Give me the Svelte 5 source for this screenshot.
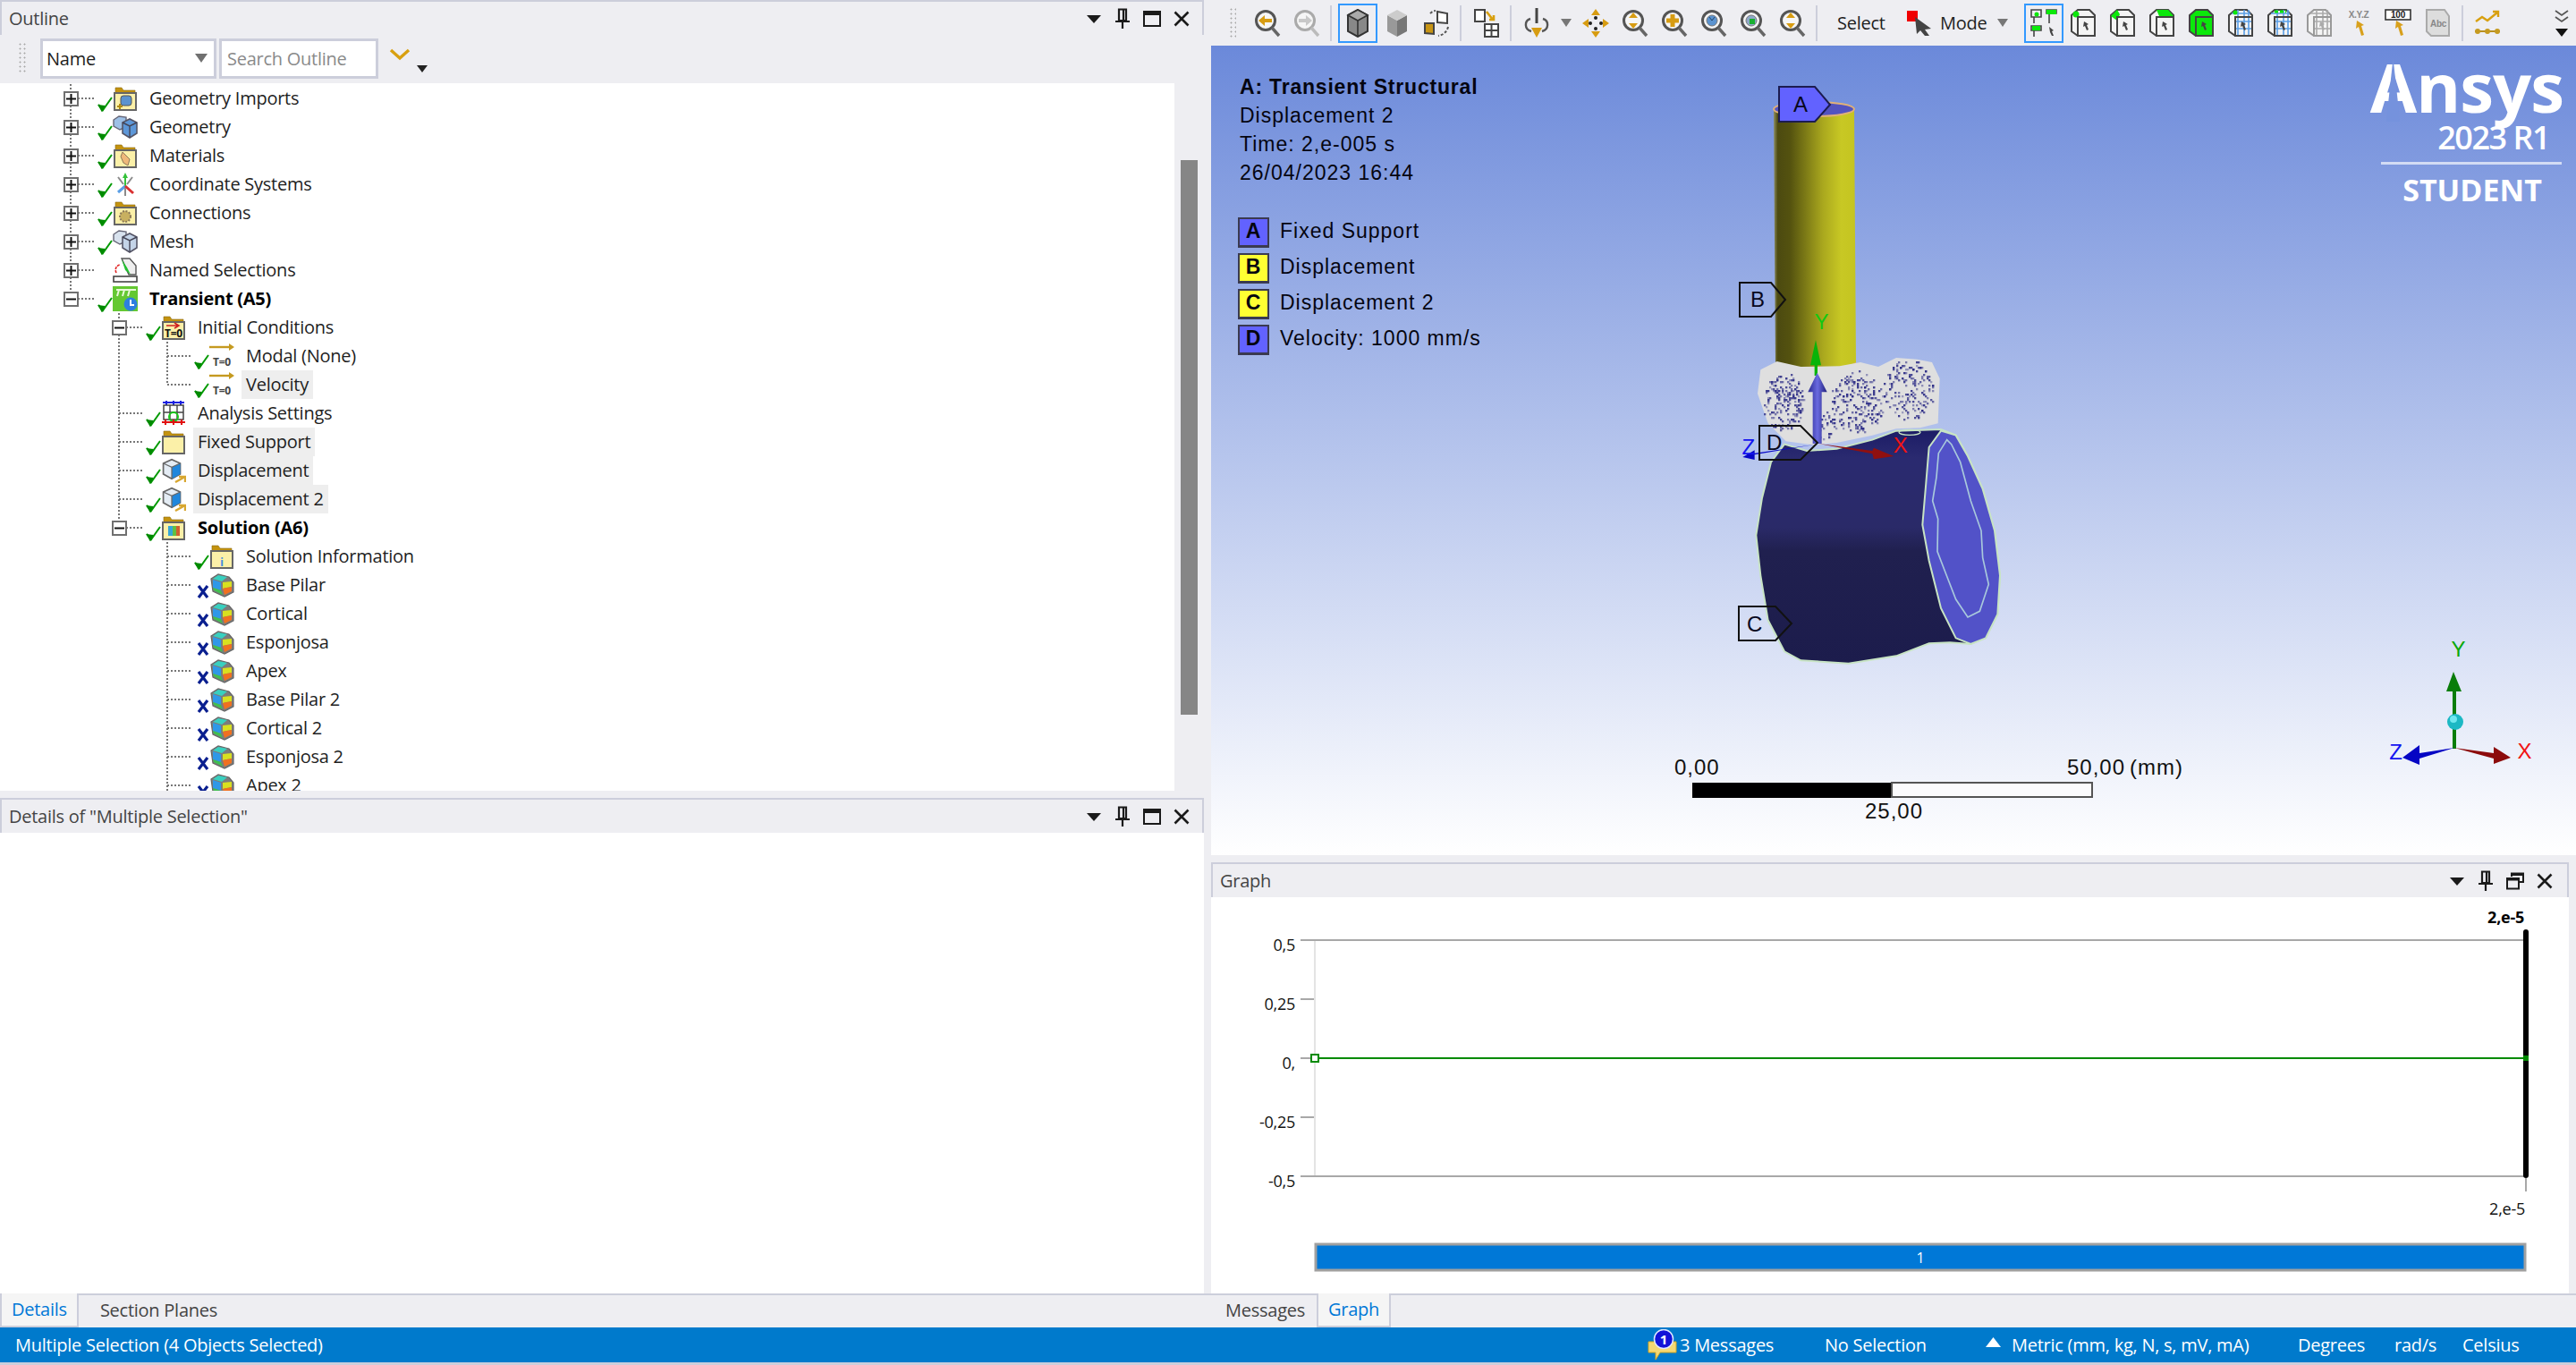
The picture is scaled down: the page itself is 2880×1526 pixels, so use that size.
<script>
  const rows = [
    { t: 'Geometry Imports', l: 0, icon: 'fgeo', st: 'ok', exp: '+' },
    { t: 'Geometry', l: 0, icon: 'geometry', st: 'ok', exp: '+' },
    { t: 'Materials', l: 0, icon: 'fmat', st: 'ok', exp: '+' },
    { t: 'Coordinate Systems', l: 0, icon: 'coord', st: 'ok', exp: '+' },
    { t: 'Connections', l: 0, icon: 'fconn', st: 'ok', exp: '+' },
    { t: 'Mesh', l: 0, icon: 'mesh', st: 'ok', exp: '+' },
    { t: 'Named Selections', l: 0, icon: 'named', exp: '+' },
    { t: 'Transient (A5)', l: 0, icon: 'transient', st: 'ok', exp: '-', end: true, bold: true },
    { t: 'Initial Conditions', l: 1, icon: 'fic', st: 'ok', exp: '-' },
    { t: 'Modal (None)', l: 2, icon: 'tzero', st: 'ok', g: [1] },
    { t: 'Velocity', l: 2, icon: 'tzero', st: 'ok', g: [1], end: true, sel: true },
    { t: 'Analysis Settings', l: 1, icon: 'analysis', st: 'ok' },
    { t: 'Fixed Support', l: 1, icon: 'fixed', st: 'ok', sel: true },
    { t: 'Displacement', l: 1, icon: 'disp', st: 'ok', sel: true },
    { t: 'Displacement 2', l: 1, icon: 'disp', st: 'ok', sel: true },
    { t: 'Solution (A6)', l: 1, icon: 'fsol', st: 'ok', exp: '-', end: true, bold: true },
    { t: 'Solution Information', l: 2, icon: 'finfo', st: 'ok' },
    { t: 'Base Pilar', l: 2, icon: 'result', st: 'x' },
    { t: 'Cortical', l: 2, icon: 'result', st: 'x' },
    { t: 'Esponjosa', l: 2, icon: 'result', st: 'x' },
    { t: 'Apex', l: 2, icon: 'result', st: 'x' },
    { t: 'Base Pilar 2', l: 2, icon: 'result', st: 'x' },
    { t: 'Cortical 2', l: 2, icon: 'result', st: 'x' },
    { t: 'Esponjosa 2', l: 2, icon: 'result', st: 'x' },
    { t: 'Apex 2', l: 2, icon: 'result', st: 'x' }
  ];

  const legend = [
    { k: 'A', c: 'blue', t: 'Fixed Support' },
    { k: 'B', c: 'yellow', t: 'Displacement' },
    { k: 'C', c: 'yellow', t: 'Displacement 2' },
    { k: 'D', c: 'blue', t: 'Velocity: 1000 mm/s' }
  ];

  const ticks = [
    { v: '0,5', y: 1052 },
    { v: '0,25', y: 1118 },
    { v: '0,', y: 1184 },
    { v: '-0,25', y: 1250 },
    { v: '-0,5', y: 1316 }
  ];

  const filters = ['vertex', 'edge', 'face', 'body', 'mvertex', 'melem', 'mgray', 'xyz', 'hundred', 'abc'];

  // speckle of the foam lobes, in the same zoomed coordinates as the bone group
  const lobes = [
    { x: 340, y: 265, rx: 70, ry: 95, n: 190 },
    { x: 590, y: 265, rx: 90, ry: 105, n: 210 },
    { x: 760, y: 225, rx: 85, ry: 100, n: 170 },
    { x: 480, y: 340, rx: 40, ry: 50, n: 35 }
  ];
  let seed = 4211;
  function rnd() {
    seed = (seed * 1103515 + 12345) % 2147483;
    return seed / 2147483;
  }
  const specks = [];
  for (const lobe of lobes) {
    for (let i = 0; i < lobe.n; i++) {
      const a = rnd() * Math.PI * 2;
      const r = Math.sqrt(rnd());
      specks.push({
        x: Math.round((lobe.x + Math.cos(a) * r * lobe.rx) / 6) * 6,
        y: Math.round((lobe.y + Math.sin(a) * r * lobe.ry) / 6) * 6,
        o: 0.35 + rnd() * 0.6
      });
    }
  }
</script>

{#snippet check()}
  <svg width="17" height="17" viewBox="0 0 17 17"><path d="M1 9 L6 15 L16 1" fill="none" stroke="#009a00" stroke-width="2" /><path d="M1 9 L5 16 L8 10" fill="#008a00" stroke="#008a00" stroke-width="1.5" /></svg>
{/snippet}

{#snippet cross()}
  <svg width="14" height="15" viewBox="0 0 14 15"><path d="M2 1 L12 14 M12 1 L2 14" stroke="#0a1f8f" stroke-width="3.2" /></svg>
{/snippet}

{#snippet cubeMark(face, stroke)}
  <path d="M3 7 L14 2 L25 7 L25 21 L14 27 L3 21 Z" fill="#e4ecf4" stroke={stroke} stroke-width="2" />
  <path d="M14 12 L25 7 L25 21 L14 27 Z" fill={face} />
  <path d="M3 7 L14 12 L25 7 M14 12 L14 27" fill="none" stroke={stroke} stroke-width="1.5" />
{/snippet}

{#snippet treeIcon(kind)}
  <svg class="ticon" width="28" height="28" viewBox="0 0 28 28">
    {#if kind[0] === 'f'}
      <path d="M3 2 H10 L12 5 H25 V10 H3 Z" fill="#c4930f" stroke="#8a6a10" stroke-width=".6" />
      <rect x="2" y="8" width="24" height="19" fill="#fbf0a8" stroke="#666" stroke-width="2" />
      {#if kind === 'fgeo'}
        <rect x="9" y="11" width="12" height="11" rx="3" fill="#5b93cf" stroke="#555" />
        <path d="M5 23 h6 M8 20 v6" stroke="#b08a10" stroke-width="2" />
      {:else if kind === 'fmat'}
        <path d="M11 10 L19 18 L17 25 L12 22 L9 15 Z" fill="#efb87a" stroke="#8c7a5a" />
      {:else if kind === 'fconn'}
        <circle cx="14" cy="18" r="6" fill="#c8b060" stroke="#8c7a5a" stroke-width="2" stroke-dasharray="2 1.5" />
      {:else if kind === 'fsol'}
        <rect x="8" y="12" width="5" height="11" fill="#35a7d8" /><rect x="13" y="12" width="4" height="11" fill="#62c040" /><rect x="17" y="12" width="4" height="11" fill="#d06030" />
      {:else if kind === 'finfo'}
        <text x="14" y="25" text-anchor="middle" class="icotext" fill="#3a8ae0">i</text>
      {:else if kind === 'fic'}
        <path d="M6 12 H19 M15 9 L20 12 L15 15" fill="none" stroke="#d02020" stroke-width="1.6" />
        <text x="14" y="25" text-anchor="middle" class="icotext" fill="#111">T=0</text>
      {/if}
    {:else if kind === 'geometry' || kind === 'mesh'}
      {@const c = kind === 'mesh' ? '#c4d4e8' : '#5d97d8'}
      <path d="M1 6 L7 2 L15 3 L15 14 L8 17 L1 13 Z" fill={kind === 'mesh' ? '#d8e2ee' : '#9dc0e6'} stroke="#667" stroke-width="1.4" />
      <path d="M11 9 L19 5 L27 9 L27 21 L19 26 L11 21 Z" fill={c} stroke="#556" stroke-width="1.6" />
      <path d="M11 9 L19 13 L27 9 M19 13 L19 26" fill="none" stroke="#445" stroke-width="1.4" />
    {:else if kind === 'coord'}
      <path d="M14 1 L17 7 H15 V16 H13 V7 H11 Z" fill="#36c23a" />
      <path d="M14 16 L6 23" stroke="#5b9fe6" stroke-width="3" /><path d="M14 16 L23 24" stroke="#d93030" stroke-width="3" />
      <path d="M6 6 L12 14 M22 6 L16 14 M14 18 V27" stroke="#8b8b8b" stroke-width="2" />
    {:else if kind === 'named'}
      <path d="M10 1 L19 1 L26 9 L26 19 L18 19 Z" fill="#eee" stroke="#555" stroke-width="1.4" />
      <path d="M10 2 L16 11 L20 19 L14 14 Z" fill="#22c030" />
      <path d="M4 17 C2 13 4 9 8 8" fill="none" stroke="#e02020" stroke-width="1.6" stroke-dasharray="3 1" />
      <rect x="1" y="21" width="26" height="6" fill="#fff" stroke="#444" stroke-width="1.6" />
    {:else if kind === 'transient'}
      <rect width="28" height="28" fill="#64c832" />
      <path d="M4 4 H26 M7 4 L5 11 M13 4 L11 11 M19 4 L17 11" stroke="#e8f8d8" stroke-width="2" />
      <circle cx="20" cy="20" r="7.5" fill="#2d7fe0" /><path d="M20 15 V21 H24" fill="none" stroke="#fff" stroke-width="2" />
    {:else if kind === 'tzero'}
      <path d="M0 4 H24" stroke="#c59a20" stroke-width="2.4" /><path d="M22 0 L28 4 L22 8 Z" fill="#c59a20" />
      <text x="14" y="25" text-anchor="middle" class="icotext" fill="#444">T=0</text>
    {:else if kind === 'analysis'}
      <path d="M2 2 H26 M6 0 V5 M14 0 V5 M22 0 V5" stroke="#1a20e0" stroke-width="2" />
      <rect x="3" y="5" width="22" height="16" fill="#fff" stroke="#444" stroke-width="1.5" />
      <path d="M10 5 V21 M18 5 V21 M3 13 H25" stroke="#444" stroke-width="1.4" />
      <circle cx="14" cy="18" r="5" fill="none" stroke="#18c818" stroke-width="2" />
      <path d="M1 24 H27 M5 21 V27 M14 21 V27 M23 21 V27" stroke="#e01010" stroke-width="2" />
    {:else if kind === 'fixed'}
      <g transform="scale(.86)">{@render cubeMark('#1f86dc', '#666')}</g>
      <path d="M13 27 L18 21 M18 27 L23 21 M23 27 L28 21" stroke="#d8a730" stroke-width="2.4" />
    {:else if kind === 'disp'}
      <g transform="scale(.86)">{@render cubeMark('#1f86dc', '#666')}</g>
      <path d="M16 27 L27 21 M20 21 H27 V27" fill="none" stroke="#d8a730" stroke-width="2.4" />
    {:else if kind === 'result'}
      <path d="M2 7 L10 2 L22 5 L27 11 L27 22 L17 27 L4 21 Z" fill="#7c7c7c" stroke="#666" stroke-width="1.2" />
      <path d="M4 7 L10 3 L20 5 L14 10 Z" fill="#38d0c0" />
      <path d="M4 8 L13 11 L13 20 L4 17 Z" fill="#2f98e8" />
      <path d="M15 11 L25 10 L25 16 L15 18 Z" fill="#d8e020" />
      <path d="M15 18 L25 16 L25 21 L17 25 Z" fill="#f07020" />
      <path d="M4 17 L13 20 L15 25 L5 20 Z" fill="#40c050" />
    {/if}
  </svg>
{/snippet}

{#snippet panelIcons(win)}
  <span class="picons">
    <svg width="18" height="12" viewBox="0 0 18 12"><path d="M1 2 H17 L9 11 Z" fill="#1a1a1a" /></svg>
    <svg width="18" height="24" viewBox="0 0 18 24"><path d="M5 1.5 H13 V14 H5 Z M1 15 H17 M9 15 V23 M10 2 V14" fill="none" stroke="#1a1a1a" stroke-width="2.2" /></svg>
    {#if win}
      <svg width="20" height="20" viewBox="0 0 20 20"><path d="M6 5 V1.5 H19 V11 H15 M1 7 H14 V18.5 H1 Z" fill="none" stroke="#1a1a1a" stroke-width="2" /><path d="M1 8 H14 M6 2.5 H19" stroke="#1a1a1a" stroke-width="3" /></svg>
    {:else}
      <svg width="20" height="18" viewBox="0 0 20 18"><rect x="1" y="1" width="18" height="16" fill="none" stroke="#1a1a1a" stroke-width="2" /><path d="M1 3 H19" stroke="#1a1a1a" stroke-width="4" /></svg>
    {/if}
    <svg width="18" height="18" viewBox="0 0 18 18"><path d="M1.5 1.5 L16.5 16.5 M16.5 1.5 L1.5 16.5" stroke="#1a1a1a" stroke-width="2.6" /></svg>
  </span>
{/snippet}

{#snippet mag(glyph)}
  <svg width="32" height="34" viewBox="0 0 32 34">
    <circle cx="14" cy="14" r="10.5" fill="#f6f6f6" stroke={glyph === 'off' ? '#aaa' : '#555'} stroke-width="3" />
    <path d="M21 22 L29 31" stroke={glyph === 'off' ? '#bbb' : '#666'} stroke-width="3.4" />
    {#if glyph === 'back'}
      <path d="M6 14 L13 8 V12 H21 V16 H13 V20 Z" fill="#d79c12" />
    {:else if glyph === 'off'}
      <path d="M22 14 L15 8 V12 H7 V16 H15 V20 Z" fill="#c8c8c8" />
    {:else if glyph === 'updown'}
      <path d="M14 5 L19 11 H9 Z M14 23 L19 17 H9 Z" fill="#d79c12" />
    {:else if glyph === 'plus'}
      <path d="M14 7 V21 M7 14 H21" stroke="#d79c12" stroke-width="5" />
    {:else if glyph === 'blue'}
      <circle cx="14" cy="14" r="6" fill="#5b93cf" stroke="#777" /><path d="M11 10 L14 14 L17 10" stroke="#246" fill="none" />
    {:else if glyph === 'green'}
      <circle cx="14" cy="14" r="6" fill="#8fa8c8" stroke="#777" /><rect x="12" y="12" width="6" height="6" fill="#18b030" />
    {/if}
  </svg>
{/snippet}

{#snippet selBox(kind)}
  <svg width="30" height="32" viewBox="0 0 30 32">
    {#if kind === 'xyz' || kind === 'hundred'}
      {#if kind === 'xyz'}
        <text x="15" y="10" text-anchor="middle" class="tiny" fill="#888">X.Y.Z</text>
      {:else}
        <rect x="1" y="1" width="28" height="11" fill="#fff" stroke="#333" stroke-width="1.6" />
        <text x="15" y="10" text-anchor="middle" class="tiny" fill="#222">100</text>
      {/if}
      <path d="M13 13 L21 18 L18 19 L21 29 L18 30 L15 20 L12 22 Z" fill="#d8a01c" />
    {:else if kind === 'abc'}
      <path d="M3 1 H23 L28 8 V30 H8 L3 25 Z" fill="#ddd" stroke="#aaa" stroke-width="2" />
      <text x="16" y="20" text-anchor="middle" class="tiny" fill="#888">Abc</text>
    {:else}
      {@const s = kind === 'mgray' ? '#999' : '#444'}
      <path d="M2 7 L9 1 H22 L28 7 V30 H9 L2 25 Z" fill={kind === 'body' ? '#0be80b' : '#f4f4f4'} stroke={s} stroke-width="2" />
      {#if kind === 'edge'}<path d="M2 8 L9 1 L12 6 L9 13 Z" fill="#0be80b" />{/if}
      {#if kind === 'vertex'}<circle cx="7" cy="6" r="3.5" fill="#0be80b" />{/if}
      {#if kind === 'face'}<path d="M9 1 H22 L28 8 H12 Z" fill="#0be80b" />{/if}
      {#if kind === 'mvertex' || kind === 'melem' || kind === 'mgray'}
        <path d="M5 5 H26 M12 1 V30 M19 1 V30 M10 14 H28 M10 22 H28 M24 1 V30" stroke={kind === 'mgray' ? '#aaa' : '#5b9fe6'} stroke-width="1.6" />
      {/if}
      {#if kind === 'mvertex'}<circle cx="9" cy="4" r="2.5" fill="#0be80b" />{/if}
      {#if kind === 'melem'}<path d="M9 3 H22" stroke="#0be80b" stroke-width="3" stroke-dasharray="4 2" />{/if}
      <rect x="9" y="9" width="19" height="21" fill="none" stroke={s} stroke-width="2" />
      <path d="M16 14 L21 17 L19 18 L21 23 L19 24 L17 19 L15 20 Z" fill={kind === 'mgray' ? '#aaa' : '#444'} />
    {/if}
  </svg>
{/snippet}

<div class="app">
  <div class="main">
    <div class="left">
      <section class="outline">
        <div class="phead">
          <span class="ptitle">Outline</span>
          <span class="grip"></span>
          {@render panelIcons(false)}
        </div>
        <div class="otools">
          <span class="vgrip"></span>
          <div class="field namefield">Name<svg width="16" height="12" viewBox="0 0 16 12"><path d="M1 1 H15 L8 11 Z" fill="#707070" /></svg></div>
          <div class="field searchfield">Search Outline</div>
          <svg class="chev" width="24" height="14" viewBox="0 0 24 14"><path d="M2 2 L12 11 L22 2" fill="none" stroke="#d8a010" stroke-width="3.4" /></svg>
          <svg class="minidown" width="12" height="8" viewBox="0 0 12 8"><path d="M0 0 H12 L6 8 Z" fill="#222" /></svg>
        </div>
        <div class="treewrap">
          <div class="tree">
            {#each rows as r}
              <div class="row">
                {#each Array(r.l) as _, i}
                  <span class="cell" class:vline={r.g && r.g.includes(i)}></span>
                {/each}
                <span class="cell conn" class:end={r.end}>
                  {#if r.exp}
                    <span class="box">
                      <svg width="11" height="11" viewBox="0 0 11 11">
                        <path d="M0 5.5 H11" stroke="#111" stroke-width="2" />
                        {#if r.exp === '+'}<path d="M5.5 0 V11" stroke="#111" stroke-width="2" />{/if}
                      </svg>
                    </span>
                  {/if}
                </span>
                <span class="status">
                  {#if r.st === 'ok'}{@render check()}{:else if r.st === 'x'}{@render cross()}{/if}
                </span>
                {@render treeIcon(r.icon)}
                <span class="label" class:bold={r.bold} class:sel={r.sel}>{r.t}</span>
              </div>
            {/each}
          </div>
          <div class="scroll"><span class="thumb"></span></div>
        </div>
      </section>

      <section class="details">
        <div class="phead">
          <span class="ptitle">Details of "Multiple Selection"</span>
          <span class="grip"></span>
          {@render panelIcons(false)}
        </div>
        <div class="dbody"></div>
      </section>

      <div class="tabs">
        <span class="tab active first">Details</span>
        <span class="tab">Section Planes</span>
      </div>
    </div>

    <div class="right">
      <div class="toolbar">
        <span class="vgrip tgrip"></span>
        <span class="tb">{@render mag('back')}</span>
        <span class="tb">{@render mag('off')}</span>
        <span class="sep"></span>
        <span class="tb on">
          <svg width="26" height="32" viewBox="0 0 26 32"><path d="M2 7 L13 1 L24 7 V25 L13 31 L2 25 Z" fill="#888" stroke="#333" stroke-width="2" /><path d="M2 7 L13 13 L24 7 L13 1 Z" fill="#aaa" stroke="#333" stroke-width="1.6" /><path d="M13 13 V31" stroke="#333" stroke-width="1.6" /></svg>
        </span>
        <span class="tb">
          <svg width="26" height="32" viewBox="0 0 26 32"><path d="M2 7 L13 13 L13 31 L2 25 Z" fill="#999" /><path d="M24 7 L13 13 L13 31 L24 25 Z" fill="#777" /><path d="M2 7 L13 1 L24 7 L13 13 Z" fill="#ccc" /></svg>
        </span>
        <span class="tb">
          <svg width="30" height="32" viewBox="0 0 30 32"><path d="M16 3 L27 5 L27 16 L16 15 Z" fill="#fff" stroke="#444" stroke-width="2" /><path d="M2 16 L12 16 L12 28 L2 27 Z" fill="#c79414" stroke="#444" stroke-width="2" /><path d="M8 5 C10 3 12 2 14 2 M28 20 C27 25 23 29 17 30" fill="none" stroke="#555" stroke-width="2" stroke-dasharray="3 2" /></svg>
        </span>
        <span class="sep s2"></span>
        <span class="tb">
          <svg width="28" height="32" viewBox="0 0 28 32"><rect x="1" y="1" width="11" height="13" fill="#fff" stroke="#444" stroke-width="2" /><path d="M14 3 L21 12 M17 12 H22 V7" fill="none" stroke="#d8a010" stroke-width="2.6" /><rect x="12" y="17" width="15" height="14" fill="#fff" stroke="#444" stroke-width="2" /><path d="M19.5 17 V31 M12 24 H27" stroke="#444" stroke-width="2" /></svg>
        </span>
        <span class="sep s2"></span>
        <span class="tb">
          <svg width="30" height="36" viewBox="0 0 30 36"><path d="M15 1 V18" stroke="#444" stroke-width="3" /><path d="M8 13 C1 15 1 25 9 27 M22 13 C29 15 29 25 21 27" fill="none" stroke="#555" stroke-width="2.4" /><path d="M9 23 H21 L15 34 Z" fill="#d79c12" /></svg>
        </span>
        <span class="mini"><svg width="12" height="9" viewBox="0 0 12 9"><path d="M0 0 H12 L6 9 Z" fill="#777" /></svg></span>
        <span class="tb">
          <svg width="30" height="32" viewBox="0 0 30 32"><path d="M15 0 L20 7 H10 Z M15 32 L20 25 H10 Z M0 16 L7 11 V21 Z M30 16 L23 11 V21 Z" fill="#d79c12" /><circle cx="15" cy="10" r="2" fill="#222" /><circle cx="15" cy="22" r="2" fill="#222" /><circle cx="9" cy="16" r="2" fill="#222" /><circle cx="21" cy="16" r="2" fill="#222" /></svg>
        </span>
        <span class="tb">{@render mag('updown')}</span>
        <span class="tb">{@render mag('plus')}</span>
        <span class="tb">{@render mag('blue')}</span>
        <span class="tb">{@render mag('green')}</span>
        <span class="tb">{@render mag('updown')}</span>
        <span class="sep"></span>
        <span class="tbtext select">Select</span>
        <svg class="cursor" width="28" height="28" viewBox="0 0 28 28"><rect width="12" height="12" fill="#f00000" /><path d="M9 7 L27 20 L20 21 L25 28 H20 L15 22 L11 26 Z" fill="#444" /></svg>
        <span class="tbtext mode">Mode</span>
        <svg class="modearrow" width="12" height="9" viewBox="0 0 12 9"><path d="M0 0 H12 L6 9 Z" fill="#777" /></svg>
        <span class="tb on allsel">
          <svg width="30" height="32" viewBox="0 0 30 32">
            <path d="M1 1 H12 V9 H1 Z M4 9 V16 M18 1 H29 V5 H18 Z M21 5 V16 M1 19 H12 V24 H1 Z M4 24 V31" fill="none" stroke="#444" stroke-width="1.6" />
            <circle cx="7" cy="6" r="2.5" fill="#0be80b" /><rect x="18" y="1" width="11" height="5" fill="#0be80b" /><rect x="2" y="19" width="9" height="5" fill="#0be80b" />
            <path d="M21 20 L26 24 L24 25 L26 30 L24 30 L22 26 Z" fill="#444" />
          </svg>
        </span>
        {#each filters as f}
          <span class="tb">{@render selBox(f)}</span>
        {/each}
        <span class="sep s3"></span>
        <span class="tb">
          <svg width="30" height="30" viewBox="0 0 30 30"><path d="M2 13 L9 8 L15 12 L26 3 M21 2 H27 V8" fill="none" stroke="#d8a010" stroke-width="2.4" /><path d="M1 24 H29" stroke="#b89020" stroke-width="2" /><circle cx="4" cy="24" r="3" fill="#c59a20" /><circle cx="15" cy="24" r="3" fill="#c59a20" /><circle cx="26" cy="24" r="3" fill="#c59a20" /></svg>
        </span>
        <span class="more">
          <svg width="16" height="15" viewBox="0 0 16 15"><path d="M1 1 L8 6 L15 1 M1 8 L8 13 L15 8" fill="none" stroke="#555" stroke-width="1.8" /></svg>
          <svg width="16" height="9" viewBox="0 0 16 9"><path d="M1 0 H15 L8 9 Z" fill="#111" /></svg>
        </span>
      </div>

      <div class="viewport">
        <svg class="scene" width="1526" height="905" viewBox="1354 51 1526 905">
          <defs>
            <linearGradient id="cyl" x1="0" x2="1" y1="0" y2="0">
              <stop offset="0" stop-color="#8e8e60" />
              <stop offset=".05" stop-color="#4c4a10" />
              <stop offset=".2" stop-color="#54520f" />
              <stop offset=".6" stop-color="#aaa81e" />
              <stop offset=".82" stop-color="#c8c824" />
              <stop offset="1" stop-color="#c4c420" />
            </linearGradient>
            <linearGradient id="bone" x1="0" x2="0" y1="0" y2="1">
              <stop offset="0" stop-color="#1c1c66" />
              <stop offset=".12" stop-color="#2a2a70" />
              <stop offset=".42" stop-color="#2a2a68" />
              <stop offset=".52" stop-color="#20204f" />
              <stop offset="1" stop-color="#1c1c4c" />
            </linearGradient>
            <linearGradient id="shaft" x1="0" x2="1" y1="0" y2="0">
              <stop offset="0" stop-color="#2a2a90" />
              <stop offset=".5" stop-color="#6a6ae0" />
              <stop offset="1" stop-color="#20207a" />
            </linearGradient>
          </defs>

          <!-- post -->
          <path d="M1983 122 L1985 408 C2000 415 2060 415 2075 408 L2073 122 Z" fill="url(#cyl)" />
          <path d="M1985 405 C2000 414 2060 414 2075 405 L2075 409 C2060 416 2000 416 1985 409 Z" fill="#e0b078" />
          <ellipse cx="2028" cy="122" rx="45" ry="8" fill="#5353bf" stroke="#e0b078" stroke-width="2" />

          <g transform="translate(1880 360) scale(.33333)">
            <!-- bone block -->
            <path d="M300 470 L345 410 L420 432 L520 425 L640 395 L720 365 L870 360 L920 380 L960 450 L1010 560 L1050 700 L1068 850 L1060 980 L1020 1060 L970 1080 L900 1075 L830 1078 L720 1120 L560 1145 L400 1135 L345 1105 L290 1000 L265 850 L250 715 L270 590 Z" fill="url(#bone)" stroke="#c8e4c4" stroke-width="6" />
            <path d="M870 365 L920 380 L960 450 L1010 560 L1050 700 L1068 850 L1060 980 L1020 1060 L970 1080 L920 1060 L870 960 L830 800 L808 680 L820 540 L830 420 Z" fill="#5252c8" stroke="#c8e4c4" stroke-width="6" />
            <path d="M890 395 L862 440 L855 520 L842 600 L860 660 L858 770 L885 840 L920 930 L960 990 L1000 970 L1030 880 L1010 790 L1005 700 L970 600 L935 470 L905 410 Z" fill="none" stroke="#a8c8dc" stroke-width="5" />
            <!-- foam -->
            <path d="M265 160 L320 132 L400 150 L530 148 L600 135 L660 150 L720 120 L790 125 L840 135 L866 190 L860 340 L800 355 L720 358 L640 380 L520 405 L440 412 L350 400 L290 340 L255 240 Z" fill="#dfdfdf" />
            {#each specks as s}
              <rect x={s.x} y={s.y} width="7" height="7" fill="#2c2c86" opacity={s.o} />
            {/each}
            <ellipse cx="765" cy="370" rx="36" ry="9" fill="none" stroke="#c8e4c4" stroke-width="4" />
            <!-- load arrows -->
            <path d="M450 60 L468 145 H456 V180 H446 V145 H432 Z" fill="#08b408" />
            <path d="M455 170 L488 235 H470 V408 H440 V235 H424 Z" fill="url(#shaft)" />
            <path d="M450 410 L245 445 V462 L205 453 L245 430 V440 Z" fill="#0606c8" />
            <path d="M460 408 L640 432 L645 422 L712 450 L645 460 L640 442 Z" fill="#901010" />
            <text x="470" y="25" text-anchor="middle" class="axis big" fill="#12c812">Y</text>
            <text x="225" y="445" text-anchor="middle" class="axis big" fill="#1414f0">Z</text>
            <text x="735" y="438" text-anchor="middle" class="axis big" fill="#f01414">X</text>
          </g>

          <!-- callouts -->
          <path d="M1989 97 H2029 L2046 117 L2029 136 H1989 Z" fill="#6262ff" stroke="#1c1c50" stroke-width="2" />
          <text x="2005" y="125" class="call">A</text>
          <path d="M1945 316 H1980 L1996 335 L1980 354 H1945 Z" fill="none" stroke="#111" stroke-width="2" />
          <text x="1957" y="343" class="call">B</text>
          <path d="M1967 476 H2013 L2032 495 L2013 514 H1967 Z" fill="none" stroke="#111" stroke-width="2" />
          <text x="1975" y="503" class="call">D</text>
          <path d="M1944 678 H1985 L2003 697 L1985 716 H1944 Z" fill="none" stroke="#111" stroke-width="2" />
          <text x="1953" y="706" class="call">C</text>

          <!-- scale bar -->
          <rect x="1892" y="875" width="223" height="17" fill="#000" />
          <rect x="2115" y="875" width="224" height="16" fill="#fbfbfd" stroke="#555" stroke-width="2" />
          <text x="1872" y="866" class="scale">0,00</text>
          <text x="2311" y="866" class="scale">50,00</text>
          <text x="2381" y="866" class="scale">(mm)</text>
          <text x="2085" y="915" class="scale">25,00</text>

          <!-- triad -->
          <path d="M2742 837 V773 H2735 L2743 751 L2752 773 H2746 V837 Z" fill="#0a7d0a" />
          <path d="M2744 836 L2705 842 V833 L2686 847 L2705 855 V848 Z" fill="#0505c4" />
          <path d="M2744 836 L2788 842 V835 L2807 847 L2788 854 V848 Z" fill="#8c0b0b" />
          <circle cx="2745" cy="807" r="9" fill="#1cb8c4" />
          <circle cx="2743" cy="804" r="4" fill="#70e8f0" />
          <text x="2749" y="734" text-anchor="middle" class="axis" fill="#0aa80a">Y</text>
          <text x="2679" y="849" text-anchor="middle" class="axis" fill="#1414f0">Z</text>
          <text x="2823" y="848" text-anchor="middle" class="axis" fill="#f01414">X</text>
        </svg>

        <div class="info">
          <div class="il strong">A: Transient Structural</div>
          <div class="il">Displacement 2</div>
          <div class="il">Time: 2,e-005 s</div>
          <div class="il">26/04/2023 16:44</div>
          <div class="legend">
            {#each legend as item}
              <div class="lrow">
                <span class="lkey {item.c}">{item.k}</span>
                <span class="ltext">{item.t}</span>
              </div>
            {/each}
          </div>
        </div>

        <div class="logo">
          <div class="brand"><span class="ansa">A</span>nsys</div>
          <div class="ver">2023 R1</div>
          <div class="stud">STUDENT</div>
        </div>
      </div>

      <section class="graph">
        <div class="phead">
          <span class="ptitle">Graph</span>
          <span class="grip"></span>
          {@render panelIcons(true)}
        </div>
        <div class="gbody">
          <svg width="1518" height="442" viewBox="1354 1004 1518 442">
            <path d="M1470 1051 V1317" stroke="#e4e4e4" stroke-width="2" />
            <path d="M1454 1052 H2822 M1454 1316 H2822" stroke="#a8a8a8" stroke-width="2" />
            <path d="M1454 1118 H1469 M1454 1184 H1469 M1454 1250 H1469" stroke="#a8a8a8" stroke-width="2" />
            {#each ticks as t}
              <text x="1448" y={t.y + 12} text-anchor="end" class="gt">{t.v}</text>
            {/each}
            <path d="M1470 1184 H2824" stroke="#008a00" stroke-width="2" />
            <rect x="1466" y="1180" width="8" height="8" fill="#fff" stroke="#008a00" stroke-width="2" />
            <path d="M2824 1318 V1333" stroke="#a8a8a8" stroke-width="2" />
            <rect x="2821" y="1040" width="6" height="278" rx="3" fill="#000" />
            <rect x="2821" y="1181" width="6" height="6" fill="#008a00" />
            <text x="2822" y="1033" text-anchor="end" class="gt b">2,e-5</text>
            <text x="2823" y="1359" text-anchor="end" class="gt">2,e-5</text>
            <rect x="1471" y="1392" width="1352" height="29" fill="#0078d7" stroke="#a0a0a0" stroke-width="3" />
            <text x="2147" y="1413" text-anchor="middle" class="gt bartext">1</text>
          </svg>
        </div>
      </section>

      <div class="tabs tabsr">
        <span class="tab">Messages</span>
        <span class="tab active">Graph</span>
      </div>
    </div>
  </div>

  <div class="statusbar">
    <span class="sleft">Multiple Selection (4 Objects Selected)</span>
    <svg class="infoicon" width="34" height="34" viewBox="0 0 34 34">
      <path d="M1 14 H32 V26 H14 L9 34 V26 H1 Z" fill="#f4d873" stroke="#d8a820" />
      <circle cx="18" cy="11" r="10.5" fill="#1212d8" stroke="#dfe8ff" stroke-width="1.5" />
      <text x="18" y="17" text-anchor="middle" class="itext">1</text>
    </svg>
    <span class="s msgs">3 Messages</span>
    <span class="s nosel">No Selection</span>
    <svg class="up" width="17" height="11" viewBox="0 0 17 11"><path d="M8.5 0 L17 11 H0 Z" fill="#fff" /></svg>
    <span class="s metric">Metric (mm, kg, N, s, mV, mA)</span>
    <span class="s deg">Degrees</span>
    <span class="s rad">rad/s</span>
    <span class="s cel">Celsius</span>
  </div>
</div>

<style>
  :global(body) {
    margin: 0;
    background: #eeeef2;
  }

  .app {
    width: 2880px;
    height: 1526px;
    overflow: hidden;
    display: flex;
    flex-direction: column;
    background: #eeeef2;
    font-family: "Open Sans", "Noto Sans", sans-serif;
    font-size: 20px;
    letter-spacing: -0.25px;
    color: #1e1e1e;
  }

  .main {
    display: flex;
    height: 1484px;
  }

  .left {
    width: 1346px;
    display: flex;
    flex-direction: column;
  }

  .right {
    width: 1534px;
    display: flex;
    flex-direction: column;
  }

  .outline {
    height: 884px;
    display: flex;
    flex-direction: column;
  }

  .details {
    margin-top: 8px;
    height: 554px;
    display: flex;
    flex-direction: column;
  }

  .phead {
    height: 39px;
    box-sizing: border-box;
    flex: none;
    display: flex;
    align-items: center;
    border-top: 2px solid #cccedb;
    border-left: 2px solid #cccedb;
    border-right: 2px solid #cccedb;
    padding: 0 14px 0 8px;
    color: #444;
  }

  .grip {
    flex: 1;
    height: 14px;
    margin: 0 20px 2px 14px;
    background-image: radial-gradient(#a8a8a8 0.9px, transparent 1.1px), radial-gradient(#a8a8a8 0.9px, transparent 1.1px);
    background-size: 16px 8px;
    background-position: 0 0, 8px 4px;
  }

  .picons {
    display: flex;
    align-items: center;
    gap: 14px;
  }

  .otools {
    height: 54px;
    flex: none;
    display: flex;
    align-items: center;
    padding-bottom: 2px;
    box-sizing: border-box;
  }

  .vgrip {
    width: 10px;
    height: 36px;
    margin-left: 20px;
    background-image: radial-gradient(#a8a8a8 0.9px, transparent 1.1px);
    background-size: 5px 5px;
  }

  .field {
    height: 45px;
    box-sizing: border-box;
    background: #fff;
    border: 3px solid #cccedb;
    display: flex;
    align-items: center;
    padding: 0 4px;
  }

  .namefield {
    width: 197px;
    margin-left: 15px;
    justify-content: space-between;
    padding-right: 6px;
  }

  .searchfield {
    width: 178px;
    margin-left: 3px;
    color: #8a8a8a;
    padding-left: 6px;
  }

  .chev {
    margin-left: 12px;
    margin-bottom: 8px;
  }

  .minidown {
    margin-left: 7px;
    margin-top: 24px;
  }

  .treewrap {
    flex: 1;
    min-height: 0;
    display: flex;
  }

  .tree {
    width: 1313px;
    background: #fff;
    overflow: hidden;
    padding-top: 1px;
  }

  .scroll {
    flex: 1;
    padding: 86px 0 0 7px;
  }

  .thumb {
    display: block;
    width: 19px;
    height: 620px;
    background: #868686;
  }

  .row {
    display: flex;
    align-items: center;
    height: 32px;
    padding-left: 52px;
  }

  .cell {
    width: 54px;
    height: 32px;
    flex: none;
    display: flex;
    align-items: center;
    justify-content: center;
  }

  .vline {
    background: repeating-linear-gradient(to bottom, #777 0 2px, transparent 2px 4px) center / 2px 100% no-repeat;
  }

  .conn {
    background:
      repeating-linear-gradient(to bottom, #777 0 2px, transparent 2px 4px) center top / 2px 100% no-repeat,
      repeating-linear-gradient(to right, #777 0 2px, transparent 2px 4px) right center / 50% 2px no-repeat;
  }

  .conn.end {
    background:
      repeating-linear-gradient(to bottom, #777 0 2px, transparent 2px 4px) center top / 2px 50% no-repeat,
      repeating-linear-gradient(to right, #777 0 2px, transparent 2px 4px) right center / 50% 2px no-repeat;
  }

  .box {
    width: 17px;
    height: 17px;
    box-sizing: border-box;
    border: 2px solid #707070;
    background: #fff;
    display: flex;
    align-items: center;
    justify-content: center;
  }

  .status {
    width: 20px;
    flex: none;
    height: 32px;
    display: flex;
    align-items: flex-end;
    justify-content: flex-end;
    padding-bottom: 1px;
    box-sizing: border-box;
  }

  .ticon {
    flex: none;
  }

  .label {
    margin-left: 8px;
    height: 32px;
    line-height: 31px;
    padding: 0 5px;
    white-space: nowrap;
  }

  .label.bold {
    font-weight: 700;
    color: #000;
  }

  .label.sel {
    background: #eeeeee;
  }

  .icotext {
    font-size: 12px;
    font-weight: 700;
  }

  .dbody {
    flex: 1;
    background: #fff;
  }

  .tabs {
    height: 38px;
    flex: none;
    display: flex;
    border-top: 2px solid #cccedb;
    box-sizing: border-box;
    color: #444;
  }

  .tab {
    display: flex;
    align-items: center;
    padding: 0 13px 4px 24px;
  }

  .tab.active {
    background: #f5f5f5;
    color: #0078d7;
    border-left: 2px solid #cccedb;
    border-right: 2px solid #cccedb;
    border-bottom: 2px solid #cccedb;
    margin-top: -2px;
    padding: 0 11px 2px;
  }

  .tabsr {
    margin-left: 0;
    padding-left: 0;
  }

  .toolbar {
    height: 51px;
    flex: none;
    display: flex;
    align-items: center;
    box-sizing: border-box;
  }

  .tgrip {
    margin-left: 28px;
    margin-right: 13px;
    width: 8px;
  }

  .tb {
    width: 44px;
    height: 44px;
    flex: none;
    display: flex;
    align-items: center;
    justify-content: center;
    box-sizing: border-box;
  }

  .tb.on {
    border: 2px solid #3399ff;
  }

  .sep {
    width: 2px;
    height: 40px;
    flex: none;
    background: #cccedb;
    margin: 0 7px 0 4px;
  }

  .sep.s2 {
    margin: 0 6px 0 4px;
  }

  .sep.s3 {
    margin: 0 5px 0 5px;
  }

  .mini {
    width: 22px;
    flex: none;
    display: flex;
    justify-content: center;
  }

  .tbtext {
    flex: none;
    color: #1e1e1e;
  }

  .select {
    margin-left: 15px;
    width: 59px;
  }

  .cursor {
    margin-left: 19px;
    flex: none;
  }

  .mode {
    margin-left: 9px;
    width: 60px;
  }

  .modearrow {
    margin-left: 4px;
    flex: none;
  }

  .allsel {
    margin-left: 18px;
  }

  .more {
    margin-left: auto;
    margin-right: 8px;
    display: flex;
    flex-direction: column;
    gap: 6px;
  }

  .viewport {
    position: relative;
    height: 905px;
    flex: none;
    margin-left: 8px;
    background: linear-gradient(to bottom, #6b89da, #ffffff);
    overflow: hidden;
    font-family: "Liberation Sans", sans-serif;
    font-size: 23px;
    letter-spacing: 1px;
    color: #050510;
  }

  .scene {
    position: absolute;
    inset: 0;
  }

  .info {
    position: relative;
    padding: 30px 0 0 30px;
  }

  .il {
    height: 32px;
    line-height: 32px;
    padding-left: 2px;
  }

  .strong {
    font-weight: 700;
    letter-spacing: 0.8px;
  }

  .legend {
    margin-top: 34px;
    display: flex;
    flex-direction: column;
    gap: 6px;
  }

  .lrow {
    display: flex;
    align-items: center;
    gap: 12px;
    height: 34px;
  }

  .lkey {
    width: 35px;
    height: 34px;
    box-sizing: border-box;
    border: 2px solid #3a3a50;
    border-top-width: 2px;
    border-bottom-width: 3px;
    font-weight: 700;
    text-align: center;
    line-height: 27px;
  }

  .lkey.blue {
    background: #6262ff;
  }

  .lkey.yellow {
    background: #ffff33;
  }

  .ltext {
    margin-bottom: 4px;
  }

  .call {
    font-size: 24px;
    fill: #080820;
  }

  .scale {
    font-size: 24px;
    fill: #111;
  }

  .axis {
    font-size: 24px;
  }

  .axis.big {
    font-size: 72px;
  }

  .logo {
    position: absolute;
    top: 0;
    right: 0;
    width: 232px;
    height: 190px;
    color: #fff;
    letter-spacing: 0;
    font-family: "Open Sans", sans-serif;
    font-weight: 700;
  }

  .brand {
    font-size: 76px;
    line-height: 76px;
    margin-top: 8px;
    text-align: right;
    padding-right: 14px;
    letter-spacing: -1px;
  }

  .ansa {
    position: relative;
  }

  .ansa::after {
    content: "";
    position: absolute;
    left: 18px;
    right: 18px;
    top: 20px;
    bottom: 12px;
    background: #7592dd;
    clip-path: polygon(50% 0, 100% 100%, 0 100%);
  }

  .ver {
    font-size: 36px;
    line-height: 36px;
    font-weight: 600;
    text-align: right;
    padding-right: 14px;
    margin-top: 1px;
    letter-spacing: -1.5px;
    border-bottom: 3px solid rgba(255, 255, 255, 0.65);
    padding-bottom: 9px;
    margin-left: 14px;
    margin-right: 16px;
  }

  .stud {
    font-size: 34px;
    line-height: 40px;
    text-align: center;
    margin-top: 8px;
    letter-spacing: 0;
  }

  .graph {
    margin-top: 8px;
    margin-left: 8px;
    width: 1518px;
    height: 482px;
    flex: none;
    display: flex;
    flex-direction: column;
  }

  .graph .phead {
    padding-right: 16px;
    padding-left: 8px;
  }

  .gbody {
    flex: 1;
    background: #fff;
  }

  .gbody svg {
    display: block;
  }

  .gt {
    font-size: 18px;
    fill: #111;
  }

  .gt.b {
    font-weight: 700;
    fill: #000;
  }

  .bartext {
    fill: #fff;
    font-size: 16px;
  }

  .tiny {
    font-size: 10px;
    font-family: "Liberation Sans", sans-serif;
    font-weight: 700;
  }

  .statusbar {
    height: 42px;
    flex: none;
    box-sizing: border-box;
    background: #007acc;
    border-bottom: 3px solid #cccedb;
    color: #fff;
    display: flex;
    align-items: center;
    padding-left: 17px;
  }

  .sleft {
    width: 1825px;
    flex: none;
  }

  .infoicon {
    flex: none;
    margin-bottom: 2px;
  }

  .itext {
    fill: #fff;
    font-size: 15px;
    font-weight: 700;
  }

  .s {
    flex: none;
    white-space: nowrap;
  }

  .msgs {
    margin-left: 2px;
    width: 162px;
  }

  .nosel {
    width: 180px;
  }

  .up {
    flex: none;
    margin-right: 12px;
    margin-bottom: 6px;
  }

  .metric {
    width: 320px;
  }

  .deg {
    width: 108px;
  }

  .rad {
    width: 76px;
  }
</style>
